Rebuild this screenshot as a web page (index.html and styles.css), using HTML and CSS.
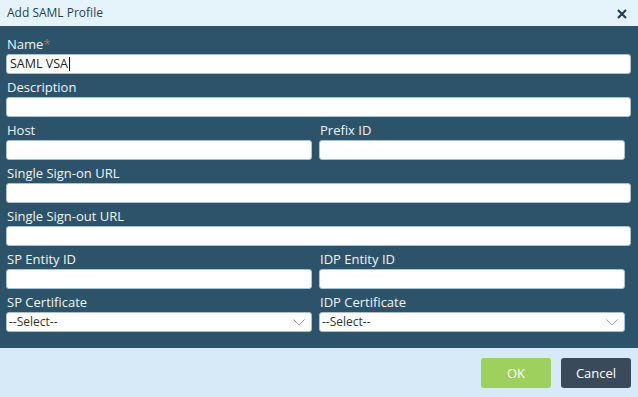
FILE: index.html
```html
<!DOCTYPE html>
<html>
<head>
<meta charset="utf-8">
<link rel="stylesheet" href="styles.css">
</head>
<body>
<div class="dialog">
  <div class="header">
    <span class="title">Add SAML Profile</span>
    <svg class="close" width="10" height="10" viewBox="0 0 10 10"><path d="M1 1 L9 9 M9 1 L1 9" stroke="#1d3d58" stroke-width="2.2" fill="none"/></svg>
  </div>
  <div class="body">
    <div class="row">
      <label class="lbl">Name<span class="req">*</span></label>
      <div class="inp"><span class="val">SAML VSA</span><span class="caret"></span></div>
    </div>
    <div class="row">
      <label class="lbl">Description</label>
      <div class="inp"></div>
    </div>
    <div class="row two">
      <div class="col">
        <label class="lbl">Host</label>
        <div class="inp"></div>
      </div>
      <div class="col">
        <label class="lbl">Prefix ID</label>
        <div class="inp"></div>
      </div>
    </div>
    <div class="row">
      <label class="lbl">Single Sign-on URL</label>
      <div class="inp"></div>
    </div>
    <div class="row">
      <label class="lbl">Single Sign-out URL</label>
      <div class="inp"></div>
    </div>
    <div class="row two">
      <div class="col">
        <label class="lbl">SP Entity ID</label>
        <div class="inp"></div>
      </div>
      <div class="col">
        <label class="lbl">IDP Entity ID</label>
        <div class="inp"></div>
      </div>
    </div>
    <div class="row two">
      <div class="col">
        <label class="lbl">SP Certificate</label>
        <div class="inp sel"><span class="opt">--Select--</span><svg class="chev" width="12" height="7" viewBox="0 0 12 7"><path d="M0.5 0.5 L6 6 L11.5 0.5" stroke="#9aa3aa" stroke-width="1" fill="none"/></svg></div>
      </div>
      <div class="col">
        <label class="lbl">IDP Certificate</label>
        <div class="inp sel"><span class="opt">--Select--</span><svg class="chev" width="12" height="7" viewBox="0 0 12 7"><path d="M0.5 0.5 L6 6 L11.5 0.5" stroke="#9aa3aa" stroke-width="1" fill="none"/></svg></div>
      </div>
    </div>
  </div>
  <div class="footer">
    <button class="btn ok">OK</button>
    <button class="btn cancel">Cancel</button>
  </div>
</div>
</body>
</html>
```

FILE: styles.css
```css
* { box-sizing: border-box; }
html, body { margin: 0; padding: 0; }
body {
  width: 638px;
  height: 397px;
  font-family: "Open Sans", "Liberation Sans", sans-serif;
  font-size: 12px;
  overflow: hidden;
}
.dialog {
  display: flex;
  flex-direction: column;
  height: 397px;
}
.header {
  height: 26px;
  background: #e5f4fb;
  display: flex;
  align-items: center;
  justify-content: space-between;
  padding: 0 11px 1px 7px;
}
.title {
  color: #2c3e4e;
  font-size: 12px;
  line-height: 16px;
}
.close { display: block; margin-top: 2px; }
.body {
  background: #2c5369;
  padding: 10px 7px 16px 6px;
  display: flex;
  flex-direction: column;
  gap: 5px;
}
.row {
  display: flex;
  flex-direction: column;
}
.row.two {
  display: grid;
  grid-template-columns: 306px 306px;
  column-gap: 7px;
}
.col { display: flex; flex-direction: column; }
.lbl {
  color: #f2f4f5;
  font-size: 13px;
  line-height: 16px;
  height: 16px;
  margin-bottom: 2px;
  padding-left: 1px;
}
.req { color: #e2505e; }
.inp {
  height: 20px;
  background: #fff;
  border: 1px solid #a8c2d2;
  border-radius: 3px;
  display: flex;
  align-items: center;
  padding: 0 0 0 3px;
  color: #222;
  font-size: 12.5px;
  line-height: 16px;
}
.caret {
  width: 1px;
  height: 14px;
  background: #111;
  margin-left: 1px;
}
.sel {
  justify-content: space-between;
  padding: 0 6px 0 2px;
  font-size: 12px;
}
.opt { color: #333; }
.chev { display: block; }
.footer {
  flex: 1;
  background: #d6ebf7;
  display: flex;
  justify-content: flex-end;
  align-items: flex-start;
  gap: 10px;
  padding: 10px 7px 0 0;
}
.btn {
  width: 70px;
  height: 30px;
  border: none;
  border-radius: 3px;
  font-family: "Open Sans", "Liberation Sans", sans-serif;
  font-size: 13px;
  color: #fff;
  padding: 0;
}
.ok { background: #9dd05c; }
.cancel { background: #3a4a5b; }
```
